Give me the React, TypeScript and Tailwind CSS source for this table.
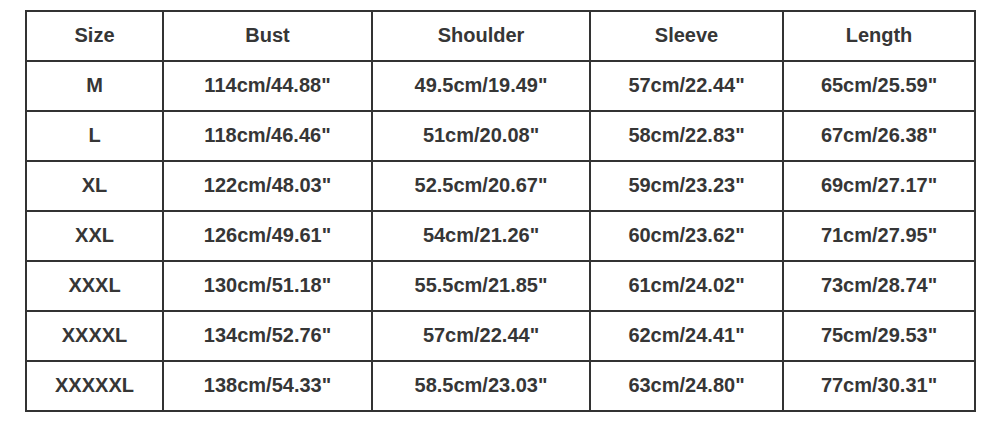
const rows = [
  ["Size", "Bust", "Shoulder", "Sleeve", "Length"],
  ["M", "114cm/44.88\"", "49.5cm/19.49\"", "57cm/22.44\"", "65cm/25.59\""],
  ["L", "118cm/46.46\"", "51cm/20.08\"", "58cm/22.83\"", "67cm/26.38\""],
  ["XL", "122cm/48.03\"", "52.5cm/20.67\"", "59cm/23.23\"", "69cm/27.17\""],
  ["XXL", "126cm/49.61\"", "54cm/21.26\"", "60cm/23.62\"", "71cm/27.95\""],
  ["XXXL", "130cm/51.18\"", "55.5cm/21.85\"", "61cm/24.02\"", "73cm/28.74\""],
  ["XXXXL", "134cm/52.76\"", "57cm/22.44\"", "62cm/24.41\"", "75cm/29.53\""],
  ["XXXXXL", "138cm/54.33\"", "58.5cm/23.03\"", "63cm/24.80\"", "77cm/30.31\""],
];

export default function App() {
  return (
    <div className="w-[1000px] h-[421px] bg-white pt-[10px] pl-[25px]" style={{ fontFamily: '"Liberation Sans", Arial, sans-serif' }}>
      <table className="border-collapse text-[20px] font-bold text-[#363636]">
        <colgroup>
          <col className="w-[137px]" />
          <col className="w-[209px]" />
          <col className="w-[218px]" />
          <col className="w-[193px]" />
          <col className="w-[192px]" />
        </colgroup>
        <tbody>
          {rows.map((r, i) => (
            <tr key={i} className="h-[50px]">
              {r.map((c, j) => (
                <td key={j} className="border-2 border-[#333] text-center align-middle p-0 pb-[3px] leading-none">
                  {c}
                </td>
              ))}
            </tr>
          ))}
        </tbody>
      </table>
    </div>
  );
}
